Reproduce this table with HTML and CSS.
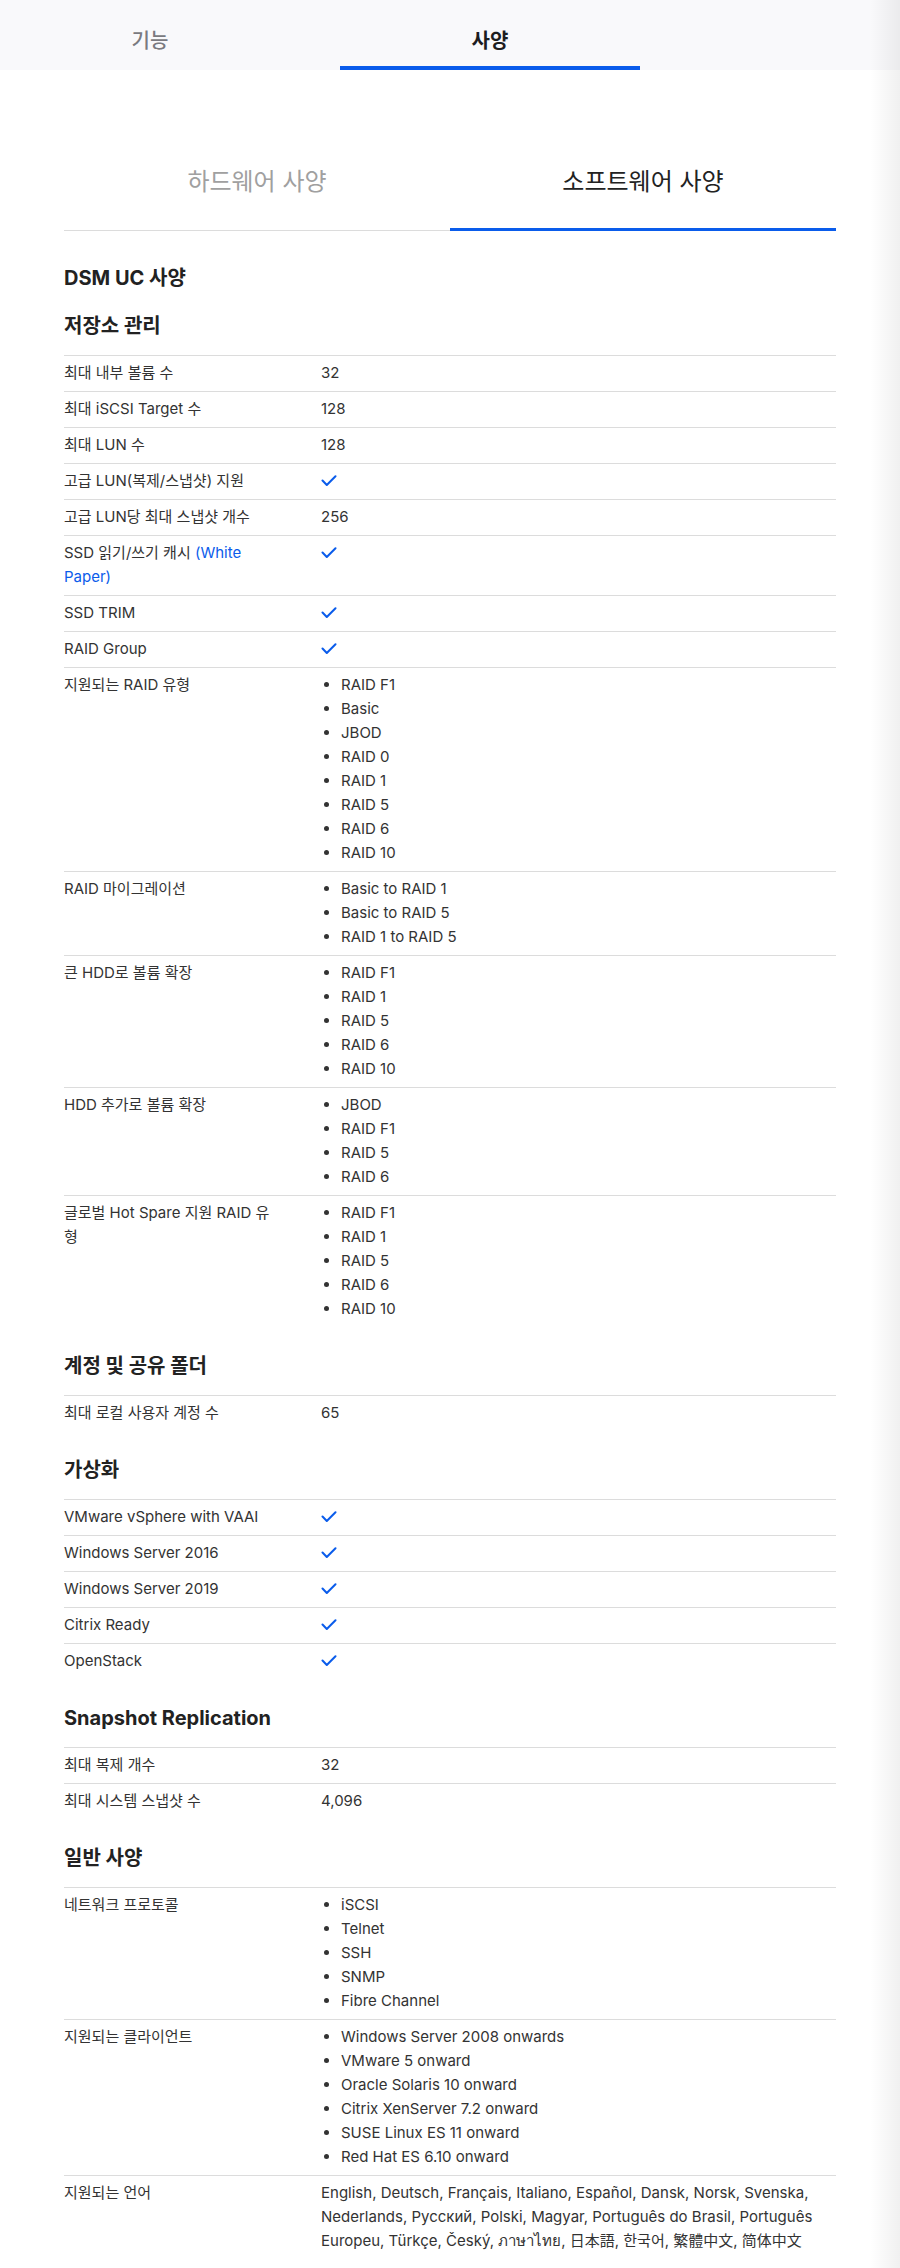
FILE: index.html
```html
<!DOCTYPE html>
<html lang="ko">
<head>
    <meta charset="UTF-8">
    <meta name="viewport" content="width=device-width, initial-scale=1.0">
    <title>사양</title>
    <link rel="stylesheet" href="styles.css">
</head>
<body>
    <div id="page">
        <nav class="topnav">
            <a class="topnav-tab">기능</a>
            <a class="topnav-tab active">사양</a>
        </nav>

        <main class="main">
            <div class="subtabs">
                <div class="subtab">하드웨어 사양</div>
                <div class="subtab active">소프트웨어 사양</div>
            </div>

            <h2 class="spec-title">DSM UC 사양</h2>

            <h3 class="spec-group first">저장소 관리</h3>
            <div class="spec-table">
                <div class="spec-row"><div class="spec-label">최대 내부 볼륨 수</div><div class="spec-value">32</div></div>
                <div class="spec-row"><div class="spec-label">최대 iSCSI Target 수</div><div class="spec-value">128</div></div>
                <div class="spec-row"><div class="spec-label">최대 LUN 수</div><div class="spec-value">128</div></div>
                <div class="spec-row"><div class="spec-label">고급 LUN(복제/스냅샷) 지원</div><div class="spec-value"><svg class="check" viewBox="0 0 16 12"><path d="M1.5 5.5 L5.8 10 L14.5 1.2"/></svg></div></div>
                <div class="spec-row"><div class="spec-label">고급 LUN당 최대 스냅샷 개수</div><div class="spec-value">256</div></div>
                <div class="spec-row"><div class="spec-label">SSD 읽기/쓰기 캐시 <a class="link">(White Paper)</a></div><div class="spec-value"><svg class="check" viewBox="0 0 16 12"><path d="M1.5 5.5 L5.8 10 L14.5 1.2"/></svg></div></div>
                <div class="spec-row"><div class="spec-label">SSD TRIM</div><div class="spec-value"><svg class="check" viewBox="0 0 16 12"><path d="M1.5 5.5 L5.8 10 L14.5 1.2"/></svg></div></div>
                <div class="spec-row"><div class="spec-label">RAID Group</div><div class="spec-value"><svg class="check" viewBox="0 0 16 12"><path d="M1.5 5.5 L5.8 10 L14.5 1.2"/></svg></div></div>
                <div class="spec-row">
                    <div class="spec-label">지원되는 RAID 유형</div>
                    <div class="spec-value">
                        <ul>
                            <li>RAID F1</li>
                            <li>Basic</li>
                            <li>JBOD</li>
                            <li>RAID 0</li>
                            <li>RAID 1</li>
                            <li>RAID 5</li>
                            <li>RAID 6</li>
                            <li>RAID 10</li>
                        </ul>
                    </div>
                </div>
                <div class="spec-row">
                    <div class="spec-label">RAID 마이그레이션</div>
                    <div class="spec-value">
                        <ul>
                            <li>Basic to RAID 1</li>
                            <li>Basic to RAID 5</li>
                            <li>RAID 1 to RAID 5</li>
                        </ul>
                    </div>
                </div>
                <div class="spec-row">
                    <div class="spec-label">큰 HDD로 볼륨 확장</div>
                    <div class="spec-value">
                        <ul>
                            <li>RAID F1</li>
                            <li>RAID 1</li>
                            <li>RAID 5</li>
                            <li>RAID 6</li>
                            <li>RAID 10</li>
                        </ul>
                    </div>
                </div>
                <div class="spec-row">
                    <div class="spec-label">HDD 추가로 볼륨 확장</div>
                    <div class="spec-value">
                        <ul>
                            <li>JBOD</li>
                            <li>RAID F1</li>
                            <li>RAID 5</li>
                            <li>RAID 6</li>
                        </ul>
                    </div>
                </div>
                <div class="spec-row">
                    <div class="spec-label">글로벌 Hot Spare 지원 RAID 유형</div>
                    <div class="spec-value">
                        <ul>
                            <li>RAID F1</li>
                            <li>RAID 1</li>
                            <li>RAID 5</li>
                            <li>RAID 6</li>
                            <li>RAID 10</li>
                        </ul>
                    </div>
                </div>
            </div>

            <h3 class="spec-group">계정 및 공유 폴더</h3>
            <div class="spec-table">
                <div class="spec-row"><div class="spec-label">최대 로컬 사용자 계정 수</div><div class="spec-value">65</div></div>
            </div>

            <h3 class="spec-group">가상화</h3>
            <div class="spec-table">
                <div class="spec-row"><div class="spec-label">VMware vSphere with VAAI</div><div class="spec-value"><svg class="check" viewBox="0 0 16 12"><path d="M1.5 5.5 L5.8 10 L14.5 1.2"/></svg></div></div>
                <div class="spec-row"><div class="spec-label">Windows Server 2016</div><div class="spec-value"><svg class="check" viewBox="0 0 16 12"><path d="M1.5 5.5 L5.8 10 L14.5 1.2"/></svg></div></div>
                <div class="spec-row"><div class="spec-label">Windows Server 2019</div><div class="spec-value"><svg class="check" viewBox="0 0 16 12"><path d="M1.5 5.5 L5.8 10 L14.5 1.2"/></svg></div></div>
                <div class="spec-row"><div class="spec-label">Citrix Ready</div><div class="spec-value"><svg class="check" viewBox="0 0 16 12"><path d="M1.5 5.5 L5.8 10 L14.5 1.2"/></svg></div></div>
                <div class="spec-row"><div class="spec-label">OpenStack</div><div class="spec-value"><svg class="check" viewBox="0 0 16 12"><path d="M1.5 5.5 L5.8 10 L14.5 1.2"/></svg></div></div>
            </div>

            <h3 class="spec-group">Snapshot Replication</h3>
            <div class="spec-table">
                <div class="spec-row"><div class="spec-label">최대 복제 개수</div><div class="spec-value">32</div></div>
                <div class="spec-row"><div class="spec-label">최대 시스템 스냅샷 수</div><div class="spec-value">4,096</div></div>
            </div>

            <h3 class="spec-group">일반 사양</h3>
            <div class="spec-table">
                <div class="spec-row">
                    <div class="spec-label">네트워크 프로토콜</div>
                    <div class="spec-value">
                        <ul>
                            <li>iSCSI</li>
                            <li>Telnet</li>
                            <li>SSH</li>
                            <li>SNMP</li>
                            <li>Fibre Channel</li>
                        </ul>
                    </div>
                </div>
                <div class="spec-row">
                    <div class="spec-label">지원되는 클라이언트</div>
                    <div class="spec-value">
                        <ul>
                            <li>Windows Server 2008 onwards</li>
                            <li>VMware 5 onward</li>
                            <li>Oracle Solaris 10 onward</li>
                            <li>Citrix XenServer 7.2 onward</li>
                            <li>SUSE Linux ES 11 onward</li>
                            <li>Red Hat ES 6.10 onward</li>
                        </ul>
                    </div>
                </div>
                <div class="spec-row">
                    <div class="spec-label">지원되는 언어</div>
                    <div class="spec-value">English, Deutsch, Français, Italiano, Español, Dansk, Norsk, Svenska, Nederlands, Русский, Polski, Magyar, Português do Brasil, Português Europeu, Türkçe, Český, ภาษาไทย, 日本語, 한국어, 繁體中文, 简体中文</div>
                </div>
            </div>
        </main>

        <div class="edge-shade"></div>
    </div>
</body>
</html>
```

FILE: styles.css
```css
* {
    margin: 0;
    padding: 0;
    box-sizing: border-box;
}

body {
    font-family: Inter, "Noto Sans CJK KR", "Noto Sans", sans-serif;
    font-size: 15px;
    line-height: 24px;
    color: #333;
    background: #fff;
}

#page {
    position: relative;
    width: 900px;
    min-height: 2268px;
    overflow: hidden;
}

/* top tab bar */
.topnav {
    display: flex;
    gap: 40px;
    height: 70px;
    background: #f9f9fb;
}

.topnav-tab {
    width: 300px;
    padding-top: 27px;
    text-align: center;
    font-size: 20px;
    line-height: 28px;
    font-weight: 500;
    color: #7a7a80;
}

.topnav-tab.active {
    color: #1d1d1f;
    font-weight: 700;
    border-bottom: 4px solid #0a5ceb;
}

.main {
    padding: 0 64px 40px;
}

/* hardware / software switch */
.subtabs {
    display: flex;
    margin-top: 96px;
}

.subtab {
    flex: 1;
    text-align: center;
    font-size: 24px;
    line-height: 32px;
    color: #a0a0a0;
    padding-bottom: 32px;
    border-bottom: 1px solid #dcdcdc;
}

.subtab.active {
    color: #222;
    padding-bottom: 30px;
    border-bottom: 3px solid #0a5ceb;
}

.spec-title {
    margin-top: 33px;
    font-size: 20px;
    line-height: 28px;
    font-weight: 700;
    color: #222;
}

.spec-group {
    margin: 25px 0 15px;
    font-size: 20px;
    line-height: 28px;
    font-weight: 700;
    color: #222;
}

.spec-group.first {
    margin-top: 20px;
}

.spec-row {
    display: grid;
    grid-template-columns: 257px 1fr;
    border-top: 1px solid #dcdcdc;
    padding: 5px 0 6px;
}

.spec-label {
    padding-right: 43px;
}

.link {
    color: #0a5ceb;
}

.check {
    display: block;
    width: 16px;
    height: 12px;
    margin-top: 6px;
    fill: none;
    stroke: #0a5ceb;
    stroke-width: 2;
    stroke-linecap: round;
    stroke-linejoin: round;
}

.spec-value ul {
    padding-left: 20px;
}

.edge-shade {
    position: absolute;
    top: 0;
    right: 0;
    bottom: 0;
    width: 30px;
    background: linear-gradient(to right, rgba(0, 0, 0, 0), rgba(0, 0, 0, 0.06));
    pointer-events: none;
}
```
